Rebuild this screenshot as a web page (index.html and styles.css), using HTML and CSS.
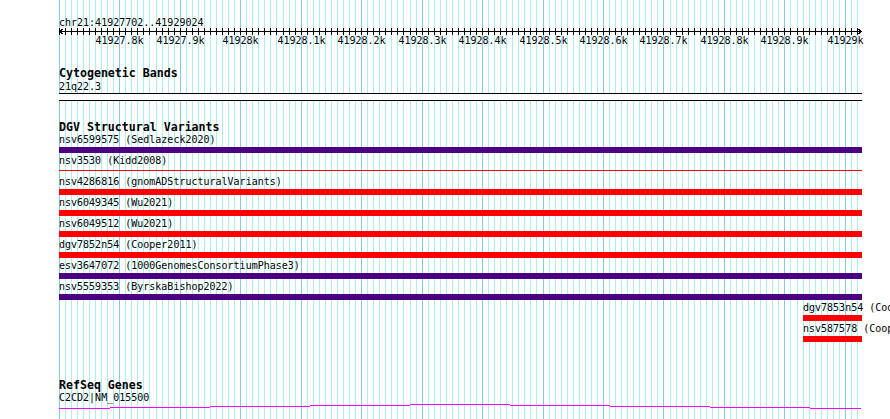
FILE: index.html
```html
<!DOCTYPE html>
<html lang="en">

<head>
    <meta charset="UTF-8">
    <meta name="viewport" content="width=device-width, initial-scale=1.0">
    <title>chr21:41927702..41929024</title>
    <link rel="stylesheet" href="styles.css">
</head>

<body>
    <div class="browser">
        <!-- grid lines are filled in by script.js -->
        <svg class="grid" id="grid" width="890" height="419"></svg>

        <div class="content">
            <div class="ruler">
                <div class="locus">chr21:41927702..41929024</div>
                <svg class="scale" id="scale" width="803" height="19"></svg>
            </div>

            <!-- Cytogenetic Bands -->
            <div class="track track-cyto">
                <div class="track-title">Cytogenetic Bands</div>
                <div class="feature-label">21q22.3</div>
                <div class="band"></div>
            </div>

            <!-- DGV Structural Variants -->
            <div class="track track-dgv">
                <div class="track-title">DGV Structural Variants</div>
                <div class="sv-row">
                    <div class="feature-label">nsv6599575 (Sedlazeck2020)</div>
                    <div class="bar bar-both"></div>
                </div>
                <div class="sv-row">
                    <div class="feature-label">nsv3530 (Kidd2008)</div>
                    <div class="bar bar-loss bar-thin"></div>
                </div>
                <div class="sv-row">
                    <div class="feature-label">nsv4286816 (gnomADStructuralVariants)</div>
                    <div class="bar bar-loss"></div>
                </div>
                <div class="sv-row">
                    <div class="feature-label">nsv6049345 (Wu2021)</div>
                    <div class="bar bar-loss"></div>
                </div>
                <div class="sv-row">
                    <div class="feature-label">nsv6049512 (Wu2021)</div>
                    <div class="bar bar-loss"></div>
                </div>
                <div class="sv-row">
                    <div class="feature-label">dgv7852n54 (Cooper2011)</div>
                    <div class="bar bar-loss"></div>
                </div>
                <div class="sv-row">
                    <div class="feature-label">esv3647072 (1000GenomesConsortiumPhase3)</div>
                    <div class="bar bar-both"></div>
                </div>
                <div class="sv-row">
                    <div class="feature-label">nsv5559353 (ByrskaBishop2022)</div>
                    <div class="bar bar-both"></div>
                </div>
                <div class="sv-row sv-row-right">
                    <div class="feature-label">dgv7853n54 (Cooper2011)</div>
                    <div class="bar bar-loss"></div>
                </div>
                <div class="sv-row sv-row-right">
                    <div class="feature-label">nsv587578 (Cooper2011)</div>
                    <div class="bar bar-loss"></div>
                </div>
            </div>

            <!-- RefSeq Genes -->
            <div class="track track-genes">
                <div class="track-title">RefSeq Genes</div>
                <div class="feature-label">C2CD2|NM_015500</div>
                <svg class="intron" width="803" height="6">
                    <rect x="0" y="5" width="51" height="1"></rect>
                    <rect x="51" y="4" width="100" height="1"></rect>
                    <rect x="151" y="3" width="100" height="1"></rect>
                    <rect x="251" y="2" width="100" height="1"></rect>
                    <rect x="351" y="1" width="100" height="1"></rect>
                    <rect x="451" y="2" width="100" height="1"></rect>
                    <rect x="551" y="3" width="100" height="1"></rect>
                    <rect x="651" y="4" width="100" height="1"></rect>
                    <rect x="751" y="5" width="51" height="1"></rect>
                </svg>
            </div>
        </div>
    </div>

    <script src="script.js"></script>
</body>

</html>
```

FILE: styles.css
```css
/* Basic Reset */
* {
    margin: 0;
    padding: 0;
    box-sizing: border-box;
}

body {
    background-color: #fff;
    color: #000;
    overflow: hidden;
}

.browser {
    position: relative;
    width: 890px;
    height: 419px;
    overflow: hidden;
    font-family: "DejaVu Sans Mono", monospace;
}

/* Grid sits behind all tracks */
.grid {
    position: absolute;
    top: 0;
    left: 0;
    shape-rendering: crispEdges;
}

.grid .minor {
    fill: #afeeee;
}

.grid .major {
    fill: #84c8ea;
}

.content {
    position: relative;
}

/* Ruler */
.ruler {
    padding-top: 17px;
    margin-left: 59px;
}

.locus {
    font-size: 10px;
    line-height: 11px;
    white-space: nowrap;
}

.scale {
    display: block;
    overflow: visible;
    shape-rendering: crispEdges;
}

.scale text {
    font-family: "DejaVu Sans Mono", monospace;
    font-size: 10px;
    fill: #000;
}

/* Tracks */
.track {
    margin-left: 59px;
    width: 803px;
}

.track-title {
    font-size: 11.6px;
    font-weight: bold;
    line-height: 13px;
    white-space: nowrap;
}

.feature-label {
    font-size: 10px;
    line-height: 11px;
    white-space: nowrap;
}

.track-cyto {
    margin-top: 20px;
}

.track-cyto .feature-label {
    margin-top: 1px;
}

.band {
    height: 8px;
    margin-top: 1px;
    background-color: #fff;
    border-top: 1px solid #000;
    border-bottom: 1px solid #000;
}

.track-dgv {
    margin-top: 20px;
}

.sv-row {
    padding-bottom: 2px;
}

.sv-row-right {
    padding-left: 744px;
}

.bar {
    height: 6px;
    margin-top: 2px;
}

.bar-thin {
    height: 1px;
    margin-top: 4px;
    margin-bottom: 3px;
}

.bar-loss {
    background-color: #f00;
}

.bar-both {
    background-color: #4b0082;
}

.track-genes {
    margin-top: 35px;
}

.intron {
    display: block;
    shape-rendering: crispEdges;
}

.intron rect {
    fill: #f0f;
}
```

FILE: script.js
```js
const START = 41927701;
const END = 41929024;
const LEFT = 59.4;
const SCALE = 800 / (END - START);
const NS = "http://www.w3.org/2000/svg";

function toX(bp) {
    return Math.round(LEFT + (bp - START) * SCALE);
}

function svgEl(name, attrs) {
    var node = document.createElementNS(NS, name);
    for (var key in attrs) {
        node.setAttribute(key, attrs[key]);
    }
    return node;
}

var grid = document.getElementById("grid");
var scale = document.getElementById("scale");

// axis line with arrow heads
scale.appendChild(svgEl("rect", { x: 0, y: 3, width: 802, height: 1, fill: "#000" }));
scale.appendChild(svgEl("polyline", {
    points: "4.5,0.5 0.5,3.5 4.5,6.5",
    fill: "none", stroke: "#000", "stroke-width": 1
}));
scale.appendChild(svgEl("polyline", {
    points: "798.5,0.5 802.5,3.5 798.5,6.5",
    fill: "none", stroke: "#000", "stroke-width": 1
}));

for (var bp = 41927700; bp <= END; bp += 10) {
    var x = toX(bp);
    var major = bp % 100 == 0;

    grid.appendChild(svgEl("rect", {
        x: x, y: 0, width: 1, height: 419,
        "class": major ? "major" : "minor"
    }));

    scale.appendChild(svgEl("rect", { x: x - 59, y: 0, width: 1, height: 7, fill: "#000" }));

    if (major && bp > START) {
        var label = svgEl("text", { x: x - 59 + 0.5, y: 15.5, "text-anchor": "middle" });
        label.textContent = (bp / 1000) + "k";
        scale.appendChild(label);
    }
}
```
